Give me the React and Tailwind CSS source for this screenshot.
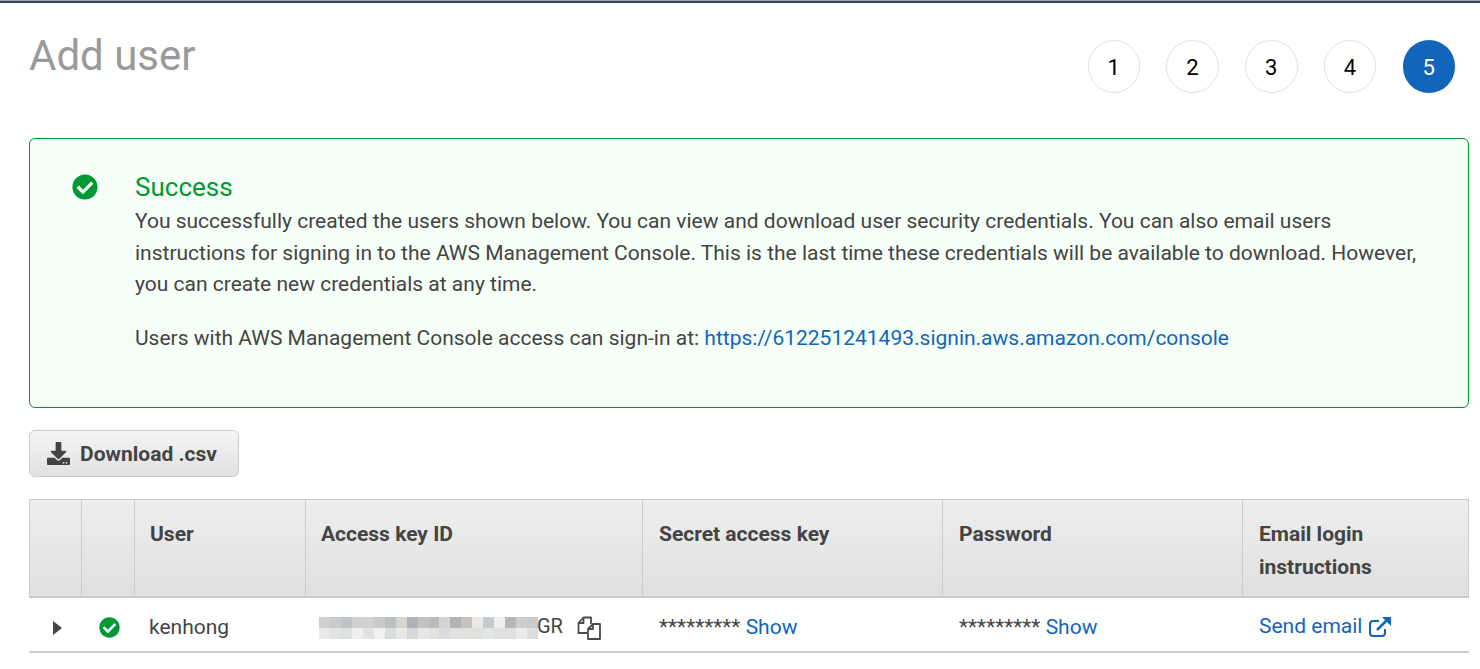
import { FaCheckCircle, FaDownload } from "react-icons/fa"

const steps = [1, 2, 3, 4]

const blurTop = [
  "bg-[#d2cfcc]", "bg-[#c9cccb]", "bg-[#bdc3c6]", "bg-[#d3cfcd]", "bg-[#cfd1d3]", "bg-[#c9c9c7]", "bg-[#bcc2c4]",
  "bg-[#d8d5d0]", "bg-[#aeb3b6]", "bg-[#c1c2c3]", "bg-[#bbbbba]", "bg-[#d2d6d6]", "bg-[#b3b3b4]", "bg-[#c4c3c0]",
  "bg-[#ece9e6]", "bg-[#c5cbcf]", "bg-[#eceef0]", "bg-[#b9b6b8]", "bg-[#cdcecc]", "bg-[#cbcbca]",
]

const blurBottom = [
  "bg-[#e9e9e9]", "bg-[#e1e3e2]", "bg-[#dde0de]", "bg-[#eeeeee]", "bg-[#e2e2e2]", "bg-[#f2f2f2]", "bg-[#d9dddc]",
  "bg-[#e9e8e6]", "bg-[#d6d9dc]", "bg-[#e6e7e9]", "bg-[#e3e2df]", "bg-[#d9dcdf]", "bg-[#e2e2e0]", "bg-[#e1e1df]",
  "bg-[#dfdfde]", "bg-[#e4e6e6]", "bg-[#dfe2e0]", "bg-[#e0e2e1]", "bg-[#ebebea]", "bg-[#dcdedd]",
]

function CopyIcon() {
  return (
    <svg width="24" height="24" viewBox="0 0 24 24" fill="none" stroke="#4a4a4a" strokeWidth="1.8" strokeLinejoin="round">
      <path d="M10 17H1.5V7L6.5 1.5H14V8" />
      <path d="M6.5 1.5V7H1.5" />
      <path d="M11 23V13L16 8H23V23z" />
      <path d="M16 8V13H11" />
    </svg>
  )
}

function ExternalIcon() {
  return (
    <svg width="24" height="22" viewBox="0 0 24 22" fill="none" stroke="#1166bb" strokeWidth="2">
      <path d="M17 13v4a3 3 0 0 1-3 3H5a3 3 0 0 1-3-3V8a3 3 0 0 1 3-3h6" />
      <path d="M9 14L19 4" strokeWidth="2.6" />
      <path d="M14 1h9v9z" fill="#1166bb" stroke="none" />
    </svg>
  )
}

function HeadCell({ children, wide }) {
  return (
    <div className={`border-l border-[#cccccc] first:border-l-0 pr-[15px] pt-[18px] text-[21px] leading-[33px] font-bold text-[#444444] ${wide ? "pl-[16px]" : "pl-[15px]"}`}>
      {children}
    </div>
  )
}

function App() {
  return (
    <div className="h-[669px] overflow-hidden bg-white font-['Roboto',sans-serif] text-[#444444]">

      {/* TOP LINE */}
      <div className="h-[3px] border-t border-[#a3a8b0] border-b-2 border-b-[#3a4456]"></div>

      <div className="pl-[29px] pr-[11px]">

        {/* TITLE + STEPS */}
        <div className="flex justify-between items-start h-[135px] pr-[14px]">

          <h1 className="text-[42px] leading-[50px] mt-[28px] text-[#9a9a9a]">Add user</h1>

          <div className="flex gap-[26.25px] mt-[37px] text-[22px] text-black">

            {steps.map((s) => (
              <div key={s} className="w-[52.5px] h-[53px] pt-[2px] rounded-full border border-[#e1e1e1] flex items-center justify-center">
                {s}
              </div>
            ))}

            <div className="w-[52.5px] h-[53px] pt-[2px] rounded-full bg-[#1166bb] text-white flex items-center justify-center">
              5
            </div>

          </div>

        </div>

        {/* SUCCESS BOX */}
        <div className="h-[270px] flex border border-[#009922] rounded-md bg-[#f6fff8] pl-[42px] pt-[33px]">

          <FaCheckCircle className="text-[#009933] text-[26px] mt-[2px] shrink-0" />

          <div className="ml-[37px] text-[21px] leading-[31.6px] text-[#444444]">

            <div className="text-[26px] leading-[30px] mb-[4px] text-[#009933]">Success</div>

            <p>
              You successfully created the users shown below. You can view and download user security credentials. You can also email users
              <br />
              instructions for signing in to the AWS Management Console. This is the last time these credentials will be available to download. However,
              <br />
              you can create new credentials at any time.
            </p>

            <p className="mt-[22px]">
              Users with AWS Management Console access can sign-in at:{" "}
              <span className="text-[#1166bb]">https://612251241493.signin.aws.amazon.com/console</span>
            </p>

          </div>

        </div>

        {/* DOWNLOAD */}
        <button className="mt-[22px] w-[210px] h-[47px] pr-[4px] flex items-center justify-center gap-[10px] border border-[#cccccc] rounded-md bg-gradient-to-b from-[#f5f5f5] to-[#e1e1e1] text-[21px] font-bold text-[#444444]">
          <FaDownload className="text-[23px] -mt-[1px]" />
          <span className="pt-[2px]">Download .csv</span>
        </button>

        {/* TABLE */}
        <div className="mt-[22px]">

          <div className="h-[99px] grid grid-cols-[51px_53px_171px_337px_300px_300px_228px] border border-b-2 border-[#cccccc] bg-gradient-to-b from-[#eeeeee] to-[#e0e0e0]">
            <HeadCell />
            <HeadCell />
            <HeadCell>User</HeadCell>
            <HeadCell>Access key ID</HeadCell>
            <HeadCell wide>Secret access key</HeadCell>
            <HeadCell wide>Password</HeadCell>
            <HeadCell wide>Email login instructions</HeadCell>
          </div>

          <div className="h-[55px] pt-[6px] grid grid-cols-[52px_53px_171px_337px_300px_300px_227px] items-center border-b-2 border-[#cccccc] text-[21px]">

            <div className="flex pl-[24px]">
              <svg width="9" height="16" viewBox="0 0 9 16">
                <path d="M0 1 L9 8 L0 15z" fill="#444444" />
              </svg>
            </div>

            <div className="flex pl-[18px]">
              <FaCheckCircle className="text-[#009933] text-[21px]" />
            </div>

            <div className="pl-[15px]">kenhong</div>

            <div className="flex items-center pl-[14px]">

              <div className="w-[219px] shrink-0">
                <div className="flex">
                  {blurTop.map((c, i) => (
                    <div key={i} className={`w-[11px] h-[11px] ${c}`}></div>
                  ))}
                </div>
                <div className="flex">
                  {blurBottom.map((c, i) => (
                    <div key={i} className={`w-[11px] h-[11px] ${c}`}></div>
                  ))}
                </div>
              </div>

              <span className="text-[20px] -mt-[3px] -ml-[1px]">GR</span>

              <span className="ml-[14px]"><CopyIcon /></span>

            </div>

            <div className="pl-[17px]">
              <span className="text-[21px]">*********</span>{" "}
              <span className="text-[#1166bb]">Show</span>
            </div>

            <div className="pl-[17px]">
              <span className="text-[21px]">*********</span>{" "}
              <span className="text-[#1166bb]">Show</span>
            </div>

            <div className="pl-[17px] -mt-[2px] flex items-center gap-[6px] text-[#1166bb]">
              Send email
              <ExternalIcon />
            </div>

          </div>

        </div>

      </div>

    </div>
  )
}

export default App
